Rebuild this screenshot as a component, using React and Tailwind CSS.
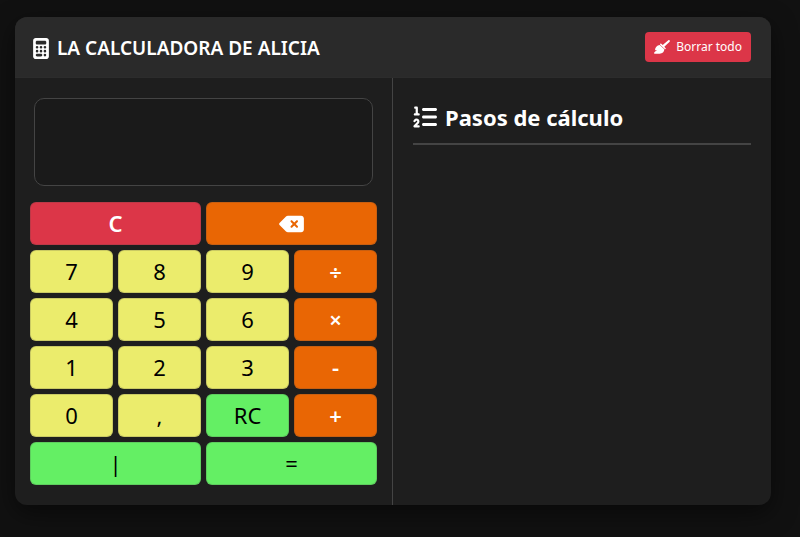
import { useState } from "react";
import { FaCalculator, FaDeleteLeft, FaListOl } from "react-icons/fa6";

const tones = {
  red: "bg-[#dc3648] text-white font-semibold",
  orange: "bg-[#e96604] text-white font-semibold",
  yellow: "bg-[#ebec6c] text-black",
  green: "bg-[#64ef64] text-black",
};

const keys = [
  { label: "C", tone: "red", wide: true },
  { label: "⌫", tone: "orange", wide: true },
  { label: "7", tone: "yellow" },
  { label: "8", tone: "yellow" },
  { label: "9", tone: "yellow" },
  { label: "÷", tone: "orange" },
  { label: "4", tone: "yellow" },
  { label: "5", tone: "yellow" },
  { label: "6", tone: "yellow" },
  { label: "×", tone: "orange" },
  { label: "1", tone: "yellow" },
  { label: "2", tone: "yellow" },
  { label: "3", tone: "yellow" },
  { label: "-", tone: "orange" },
  { label: "0", tone: "yellow" },
  { label: ",", tone: "yellow" },
  { label: "RC", tone: "green" },
  { label: "+", tone: "orange" },
  { label: "|", tone: "green", wide: true },
  { label: "=", tone: "green", wide: true },
];

const operations = {
  "+": (a, b) => a + b,
  "-": (a, b) => a - b,
  "×": (a, b) => a * b,
  "÷": (a, b) => a / b,
};

const toNumber = (text) => Number(text.replace(",", "."));
const toText = (number) => String(number).replace(".", ",");

const BroomIcon = () => (
  <svg viewBox="0 0 48 42" fill="currentColor" aria-hidden="true" className="h-[14px] w-4">
    <path d="M17 15 31 28C31 36 25 41 17 41H2C-1 41 0 38 2 36L9 30 3 31C3 22 9 16 17 15Z" />
    <path d="M20 10 26 15 43 1C46-1 49 2 47 5L31 20 36 26 33 28 18 14Z" />
  </svg>
);

const App = () => {
  const [display, setDisplay] = useState("");
  const [steps, setSteps] = useState([]);

  const calculate = () => {
    const match = display.match(/^(-?[\d,]+)([+\-×÷])([\d,]+)$/);
    if (!match) return;
    const result = toText(operations[match[2]](toNumber(match[1]), toNumber(match[3])));
    setSteps([...steps, `${display} = ${result}`]);
    setDisplay(result);
  };

  const press = (label) => {
    if (label === "C") setDisplay("");
    else if (label === "⌫") setDisplay(display.slice(0, -1));
    else if (label === "=") calculate();
    else if (label === "RC") setDisplay(`${display}√`);
    else setDisplay(display + label);
  };

  const clearAll = () => {
    setDisplay("");
    setSteps([]);
  };

  return (
    <div className="min-h-screen bg-[#111111] pt-[17px] pr-[29px] pb-8 pl-[15px] font-['Noto_Sans',sans-serif] text-white">
      <main className="overflow-hidden rounded-xl bg-[#1e1e1e] shadow-[0_8px_24px_rgba(0,0,0,0.5)]">
        <header className="flex items-end justify-between border-b border-[#2c2c2c] bg-[#2a2a2a] py-[15px] pr-5 pl-[18px]">
          <h1 className="flex items-center gap-2 text-[19px] leading-7 font-semibold">
            <FaCalculator className="h-[21px] w-4" />
            LA CALCULADORA DE ALICIA
          </h1>
          <button
            onClick={clearAll}
            className="flex h-[30px] items-center gap-[6px] rounded bg-[#dc3648] px-[9px] text-xs"
          >
            <BroomIcon />
            Borrar todo
          </button>
        </header>

        <div className="grid grid-cols-2">
          <section className="border-r border-[#444444] px-[15px] py-5">
            <div className="px-1">
              <input
                type="text"
                readOnly
                value={display}
                aria-label="Pantalla"
                className="block h-[88px] w-full rounded-[10px] border border-[#444444] bg-[#1a1a1a] px-4 text-right text-3xl outline-none"
              />
            </div>
            <div className="mt-4 grid grid-cols-4 gap-[5px]">
              {keys.map(({ label, tone, wide }) => (
                <button
                  key={label}
                  onClick={() => press(label)}
                  aria-label={label === "⌫" ? "Borrar" : label}
                  className={`flex h-[43px] items-center justify-center rounded-md border border-[#444444]/20 text-[22px] ${tones[tone]} ${wide ? "col-span-2" : ""}`}
                >
                  {label === "⌫" ? <FaDeleteLeft className="h-[22px] w-[25px]" /> : label}
                </button>
              ))}
            </div>
          </section>

          <section className="p-5">
            <h2 className="flex items-center gap-2 border-b-2 border-[#444444] pt-[3px] pb-[10px] text-[22px] leading-8 font-bold">
              <FaListOl className="size-6" />
              Pasos de cálculo
            </h2>
            <ol className="mt-3">
              {steps.map((step, i) => (
                <li key={i} className="py-1 text-lg">
                  {step}
                </li>
              ))}
            </ol>
          </section>
        </div>
      </main>
    </div>
  );
};

export default App;
